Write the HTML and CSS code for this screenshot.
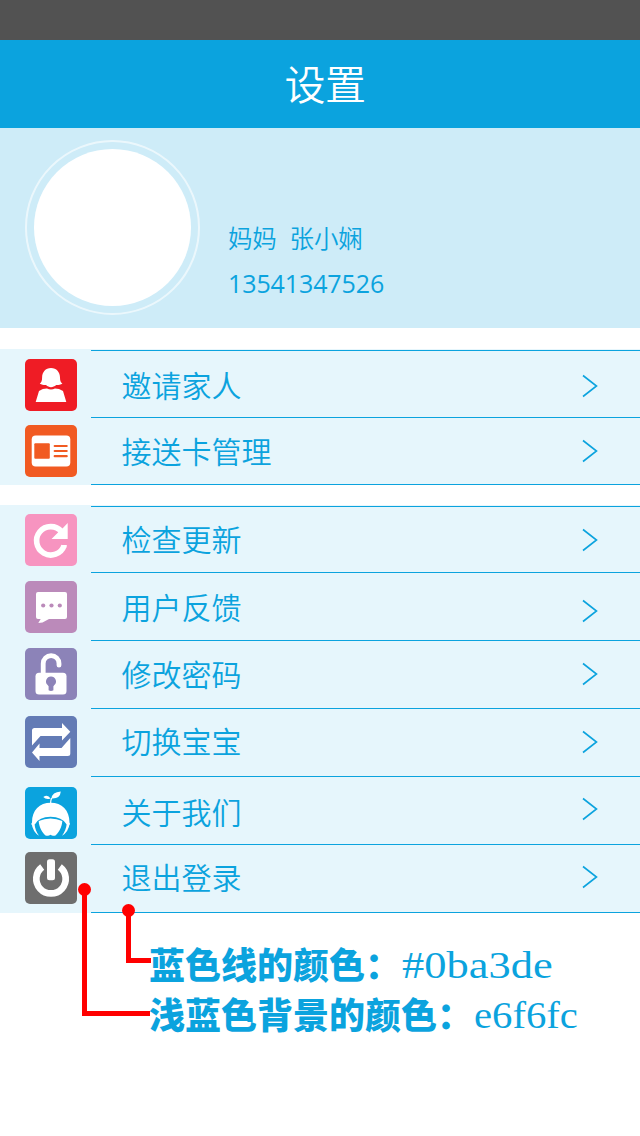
FILE: index.html
```html
<!DOCTYPE html>
<html lang="zh-CN">
<head>
<meta charset="utf-8">
<title>设置</title>
<link rel="stylesheet" href="styles.css">
</head>
<body>
<div class="screen">
  <div class="statusbar"></div>
  <header class="header"><h1 class="title">设置</h1></header>
  <section class="profile">
    <div class="avatar"><div class="avatar-inner"></div></div>
    <div class="info">
      <div class="name"><span>妈妈</span><span>张小娴</span></div>
      <div class="phone">13541347526</div>
    </div>
  </section>

  <ul class="menu">
    <li class="row row-invite">
      <svg class="icon" viewBox="0 0 52 52"><rect width="52" height="52" rx="5" fill="#ef1c25"/><path fill="#fff" d="M26 9c-5.500 0-8.900 4.200-8.900 9.500 0 3-.6 4.800-2.300 6.300 2 1 4.200 1.300 6.200 1.200 1.600 1.400 3.200 2.200 5 2.200s3.600-.8 5.200-2.200c2 .1 4.200-.2 6.200-1.200C35.600 23.300 35 21.500 35 18.500 35 13.200 31.500 9 26 9z"/><path fill="#fff" d="M10.700 43l3.300-11q4-2.500 8-2.400 4 2 8 0 4 0 8 2.400l3.300 11z"/></svg>
      <div class="body"><span class="label">邀请家人</span><svg class="chevron" viewBox="0 0 16 24"><path d="M1 1.500 14.500 12 1 22.500"/></svg></div>
    </li>
    <li class="row row-card">
      <svg class="icon" viewBox="0 0 52 52"><rect width="52" height="52" rx="5" fill="#f15a22"/><rect x="6.700" y="10.500" width="38.600" height="31" rx="4" fill="#fff"/><rect x="9.300" y="18.300" width="15.500" height="15.500" rx="1" fill="#f15a22"/><path stroke="#f15a22" stroke-width="2.200" stroke-linecap="round" d="M29.700 21h12M29.700 26h12M29.700 31.200h12"/></svg>
      <div class="body"><span class="label">接送卡管理</span><svg class="chevron" viewBox="0 0 16 24"><path d="M1 1.500 14.500 12 1 22.500"/></svg></div>
    </li>
  </ul>

  <ul class="menu">
    <li class="row row-update">
      <svg class="icon" viewBox="0 0 52 52"><rect width="52" height="52" rx="5" fill="#f794c0"/><path fill="none" stroke="#fff" stroke-width="5.600" d="M36.500 17.500A14.200 14.200 0 1 0 39.100 31.800"/><path fill="#fff" d="M42.700 9v16H26.500l6.500-6.500 2-4 2.500 0zM35.500 31h6.300q.2 1-.6 2.500z"/></svg>
      <div class="body"><span class="label">检查更新</span><svg class="chevron" viewBox="0 0 16 24"><path d="M1 1.500 14.500 12 1 22.500"/></svg></div>
    </li>
    <li class="row row-feedback">
      <svg class="icon" viewBox="0 0 52 52"><rect width="52" height="52" rx="5" fill="#bb8aba"/><path fill="#fff" d="M13 11h27q2 0 2 2v23q0 2-2 2H24l-6.500 3.500L13.300 42l2.400-4H13q-2 0-2-2V13q0-2 2-2z"/><g fill="#bb8aba"><circle cx="18.200" cy="24.500" r="2.100"/><circle cx="26.500" cy="24.500" r="2.100"/><circle cx="34.800" cy="24.500" r="2.100"/></g></svg>
      <div class="body"><span class="label">用户反馈</span><svg class="chevron" viewBox="0 0 16 24"><path d="M1 1.500 14.500 12 1 22.500"/></svg></div>
    </li>
    <li class="row row-password">
      <svg class="icon" viewBox="0 0 52 52"><rect width="52" height="52" rx="5" fill="#8c83b8"/><path fill="none" stroke="#fff" stroke-width="4.800" stroke-linecap="round" d="M18.200 26V15.500a7.900 7.900 0 0 1 15.800 0v1.700"/><rect x="10.500" y="24.700" width="31" height="21.800" rx="3.500" fill="#fff"/><path fill="#8c83b8" d="M26 28.500a4.900 4.900 0 0 1 3.600 8.300l-1.200 1.500v3.900q-2.400 1.600-4.800 0v-3.900l-1.200-1.500A4.900 4.900 0 0 1 26 28.500z"/></svg>
      <div class="body"><span class="label">修改密码</span><svg class="chevron" viewBox="0 0 16 24"><path d="M1 1.500 14.500 12 1 22.500"/></svg></div>
    </li>
    <li class="row row-switch">
      <svg class="icon" viewBox="0 0 52 52"><rect width="52" height="52" rx="5" fill="#637bb5"/><path fill="#fff" d="M7 29.500V14.500q0-2.500 2.500-2.500H37V7l8.300 8.700L37 24.500V20H15.500zM45.300 22v15.500q0 2.500-2.500 2.500H14.500v5L7 36.500l7.500-9V32H36.500z"/></svg>
      <div class="body"><span class="label">切换宝宝</span><svg class="chevron" viewBox="0 0 16 24"><path d="M1 1.500 14.500 12 1 22.500"/></svg></div>
    </li>
    <li class="row row-about">
      <svg class="icon" viewBox="0 0 52 52"><rect width="52" height="52" rx="5" fill="#0ba3de"/><path fill="#fff" d="M26.500 11.500Q27 5 35.800 4.500q-.6 7.500-9.300 7zM18.300 10q4.500-3 7.200 1.500-4.500 1.500-7.200-1.500z"/><path fill="none" stroke="#fff" stroke-width="1.300" d="M25.600 17q0-4 1-6"/><path fill="#fff" d="M7 35.500C7 23 14.500 15.700 25.700 15.700S44.500 23 44.500 35.500l.3 2.200-3.300-.5Q37 29.700 25.500 29.700T10 37.200l-3.600.5z"/><path fill="#fff" d="M13.700 34q5.500-2.600 11.800-2.600T37.300 34C37 41 33 46 30.500 48.500c-2.500.8-3 .2-5-.8-2 1-2.500 1.600-5 .8C18 46 14 41 13.700 34z"/><path fill="#fff" d="M6.500 36l3 .5Q10 43.500 14 48.700 7.800 45 6.500 36zM44.800 36l-3 .5Q41 43.500 37 48.700 43.500 45 44.800 36z"/></svg>
      <div class="body"><span class="label">关于我们</span><svg class="chevron" viewBox="0 0 16 24"><path d="M1 1.500 14.500 12 1 22.500"/></svg></div>
    </li>
    <li class="row row-logout">
      <svg class="icon" viewBox="0 0 52 52"><rect width="52" height="52" rx="5" fill="#6e6e6e"/><path fill="none" stroke="#fff" stroke-width="6.700" d="M17.200 15A14.700 14.700 0 1 0 34.800 15"/><rect x="22" y="7.300" width="8" height="21" rx="2.500" fill="#fff"/></svg>
      <div class="body"><span class="label">退出登录</span><svg class="chevron" viewBox="0 0 16 24"><path d="M1 1.500 14.500 12 1 22.500"/></svg></div>
    </li>
  </ul>

  <div class="notes">
    <p class="note"><span class="note-text">蓝色线的颜色：</span><span class="code code-line">#0ba3de</span></p>
    <p class="note"><span class="note-text">浅蓝色背景的颜色：</span><span class="code code-bg">e6f6fc</span></p>
  </div>

  <svg class="leaders" viewBox="0 0 74 136"><path d="M6.500 6v124.500H72M50.500 27v50.500H73"/><circle cx="6.500" cy="6.500" r="6.500"/><circle cx="50.500" cy="27.500" r="6.500"/></svg>
</div>
</body>
</html>
```
FILE: styles.css
```css
* { box-sizing: border-box; margin: 0; padding: 0; }

body {
  background: #fff;
  color: #0ba3de;
  font-family: "Noto Sans CJK SC", sans-serif;
  font-weight: 350;
}

.screen { position: relative; width: 640px; height: 1136px; overflow: hidden; }
.statusbar { height: 40px; background: #525252; }
.header { height: 88px; background: #0ba3de; padding-left: 10px; display: flex; justify-content: center; }
.title { color: #fff; font-size: 41px; font-weight: 350; line-height: 85px; letter-spacing: -0.5px; }

.profile { height: 200px; background: #ceecf8; display: flex; padding: 12px 0 0 25px; }
.avatar { width: 175px; height: 175px; border: 2px solid rgba(255, 255, 255, .6); border-radius: 50%; padding: 7px; }
.avatar-inner { width: 157px; height: 157px; border-radius: 50%; background: #fff; }
.info { padding: 80px 0 0 28px; }
.name { display: flex; gap: 13px; font-size: 24.500px; line-height: 36px; letter-spacing: -0.2px; }
.phone { margin-top: 10px; font-family: "Open Sans", sans-serif; font-weight: 400; font-size: 25px; line-height: 34px; letter-spacing: -0.1px; }

.menu { margin-top: 21px; padding-top: 1px; background: #e6f6fc; list-style: none; }
.menu + .menu { margin-top: 20px; }
.row { display: flex; height: 68px; padding-left: 25px; }
.icon { width: 52px; height: 52px; margin-top: 8px; flex: none; }
.body { flex: 1; margin-left: 14px; border-top: 1px solid #0ba3de; display: flex; justify-content: space-between; padding: 0 42px 0 30.500px; }
.row:last-child .body { border-bottom: 1px solid #0ba3de; }
.label { font-size: 30px; line-height: 44px; padding-top: 10px; white-space: nowrap; }
.chevron { width: 16px; height: 24px; margin-top: 21px; fill: none; stroke: #0ba3de; stroke-width: 1.600; }

.row-invite { height: 67px; }
.row-invite .icon { margin-top: 9px; }
.row-invite .label { padding-top: 11px; }
.row-invite .chevron { margin-top: 23px; }
.row-update { height: 66px; }
.row-update .label { padding-top: 9px; }
.row-feedback .icon { margin-top: 9px; }
.row-feedback .label { padding-top: 11px; }
.row-feedback .chevron { margin-top: 26px; }
.row-switch .label { padding-top: 9px; }
.row-about .icon { margin-top: 11px; }
.row-about .label { padding-top: 12px; }
.row-about .chevron { margin-top: 20px; }
.row-logout { height: 69px; }
.row-logout .label { padding-top: 9px; }
.row-logout .chevron { margin-top: 20px; }

.notes { padding: 27px 0 0 149px; }
.note { display: flex; height: 50px; font-size: 36px; font-weight: 900; line-height: 50px; white-space: nowrap; }
.note-text { line-height: 46px; }
.code { margin-left: 1px; font-family: "Liberation Serif", serif; font-weight: 400; font-size: 38px; transform-origin: 0 50%; }
.code-line { transform: scaleX(1.17); }
.code-bg { transform: scaleX(1.070); }

.leaders { position: absolute; left: 78px; top: 883px; width: 74px; height: 136px; fill: red; }
.leaders path { fill: none; stroke: red; stroke-width: 5; }
```
